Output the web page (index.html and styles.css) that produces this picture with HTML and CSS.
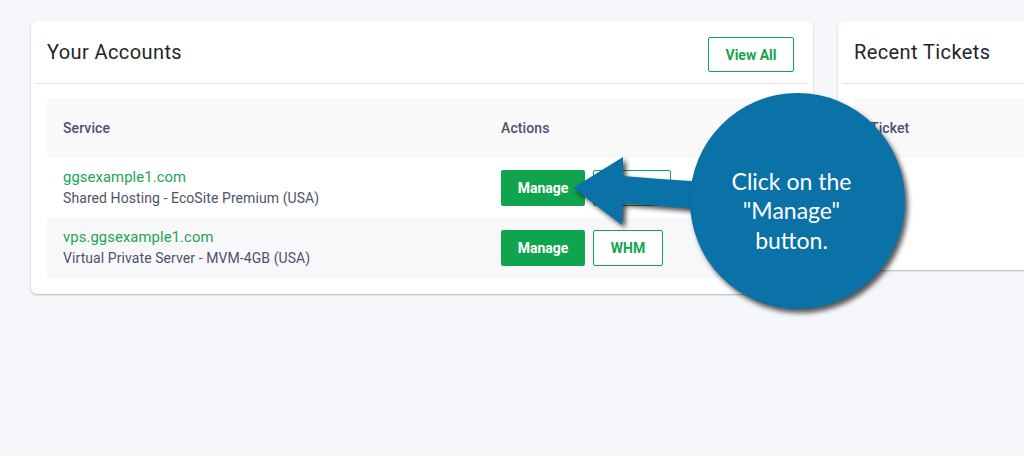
FILE: index.html
```html
<!DOCTYPE html>
<html>
<head>
<meta charset="utf-8">
<link rel="stylesheet" href="styles.css">
</head>
<body>
<div class="page">
  <section class="card card-accounts">
    <header class="card-head">
      <h2 class="card-title">Your Accounts</h2>
      <a class="btn btn-outline btn-viewall">View All</a>
    </header>
    <div class="table">
      <div class="trow thead">
        <div class="cell">Service</div>
        <div class="cell">Actions</div>
      </div>
      <div class="trow">
        <div class="cell service">
          <a class="svc-link">ggsexample1.com</a>
          <span class="svc-desc">Shared Hosting - EcoSite Premium (USA)</span>
        </div>
        <div class="cell actions">
          <a class="btn btn-solid btn-manage">Manage</a>
          <a class="btn btn-outline btn-cpanel">cPanel</a>
        </div>
      </div>
      <div class="trow striped">
        <div class="cell service">
          <a class="svc-link">vps.ggsexample1.com</a>
          <span class="svc-desc">Virtual Private Server - MVM-4GB (USA)</span>
        </div>
        <div class="cell actions">
          <a class="btn btn-solid btn-manage">Manage</a>
          <a class="btn btn-outline btn-whm">WHM</a>
        </div>
      </div>
    </div>
  </section>
  <section class="card card-tickets">
    <header class="card-head">
      <h2 class="card-title">Recent Tickets</h2>
    </header>
    <div class="table">
      <div class="trow thead">
        <div class="cell">Ticket</div>
      </div>
    </div>
  </section>
</div>

<svg class="arrow" width="1024" height="456" viewBox="0 0 1024 456">
  <polygon points="573,188 623,157 623,176 660,179 705,182 705,210 660,206 623,203 622,225" fill="#0a72a7"/>
</svg>
<div class="callout">
  <p class="callout-text">Click on the<br>"Manage"<br>button.</p>
</div>
</body>
</html>
```
FILE: styles.css
```css
* { box-sizing: border-box; }
html, body { margin: 0; padding: 0; }
body {
  width: 1024px;
  height: 456px;
  overflow: hidden;
  background: #f6f7fb;
  font-family: Roboto, "Liberation Sans", Arial, sans-serif;
  position: relative;
}
.page {
  display: flex;
  gap: 25px;
  padding: 21px 0 0 31px;
  align-items: flex-start;
}
.card {
  background: #fff;
  border-radius: 6px;
  box-shadow: 0 1px 2px rgba(0,0,0,0.28);
  flex-shrink: 0;
}
.card-accounts { width: 782px; padding-bottom: 16px; }
.card-tickets { width: 420px; height: 249px; }
.card-head {
  height: 63px;
  margin: 0 4px;
  padding: 0 15px 0 12px;
  border-bottom: 1px solid #e2e3e7;
  display: flex;
  align-items: center;
  justify-content: space-between;
}
.card-title {
  margin: 0;
  font-size: 20px;
  font-weight: 400;
  color: #23252b;
  letter-spacing: 0.4px;
}
.btn {
  display: inline-flex;
  align-items: center;
  justify-content: center;
  font-size: 14px;
  font-weight: 700;
  border-radius: 2px;
  height: 36px;
  text-decoration: none;
}
.btn-outline {
  border: 1px solid #12a54f;
  color: #12a54f;
  background: #fff;
}
.btn-solid {
  background: #10a44f;
  color: #fff;
}
.btn-viewall { width: 86px; height: 35px; margin-top: 5px; }
.table { margin: 14px 16px 0; }
.trow {
  display: grid;
  grid-template-columns: 438px 1fr;
  height: 60px;
  align-items: center;
}
.thead { background: #f9f9fa; }
.thead .cell { font-size: 14px; font-weight: 500; color: #4b5170; letter-spacing: 0.1px; }
.striped { background: #f8f8fa; }
.cell { padding-left: 16px; }
.service { display: flex; flex-direction: column; line-height: 21px; }
.svc-link { color: #1aa553; font-size: 14.8px; letter-spacing: 0.1px; }
.svc-desc { color: #4e5369; font-size: 14px; letter-spacing: 0.08px; }
.actions { display: flex; gap: 8px; }
.btn-manage { width: 84px; }
.btn-cpanel { width: 78px; }
.btn-whm { width: 70px; }

.arrow {
  position: absolute;
  left: 0;
  top: 0;
  pointer-events: none;
  filter: drop-shadow(3px 3px 2.5px rgba(0,0,0,0.7));
}
.callout {
  position: absolute;
  left: 690px;
  top: 93px;
  width: 215px;
  height: 216px;
  border-radius: 50%;
  background: #0a72a7;
  box-shadow: 3px 4px 5px rgba(0,0,0,0.65);
  display: flex;
  align-items: center;
  justify-content: center;
  padding: 20px 12px 0 0;
}
.callout-text {
  margin: 0;
  color: #fff;
  font-family: Lato, "Open Sans", sans-serif;
  font-size: 23px;
  line-height: 29.5px;
  text-align: center;
}
```
